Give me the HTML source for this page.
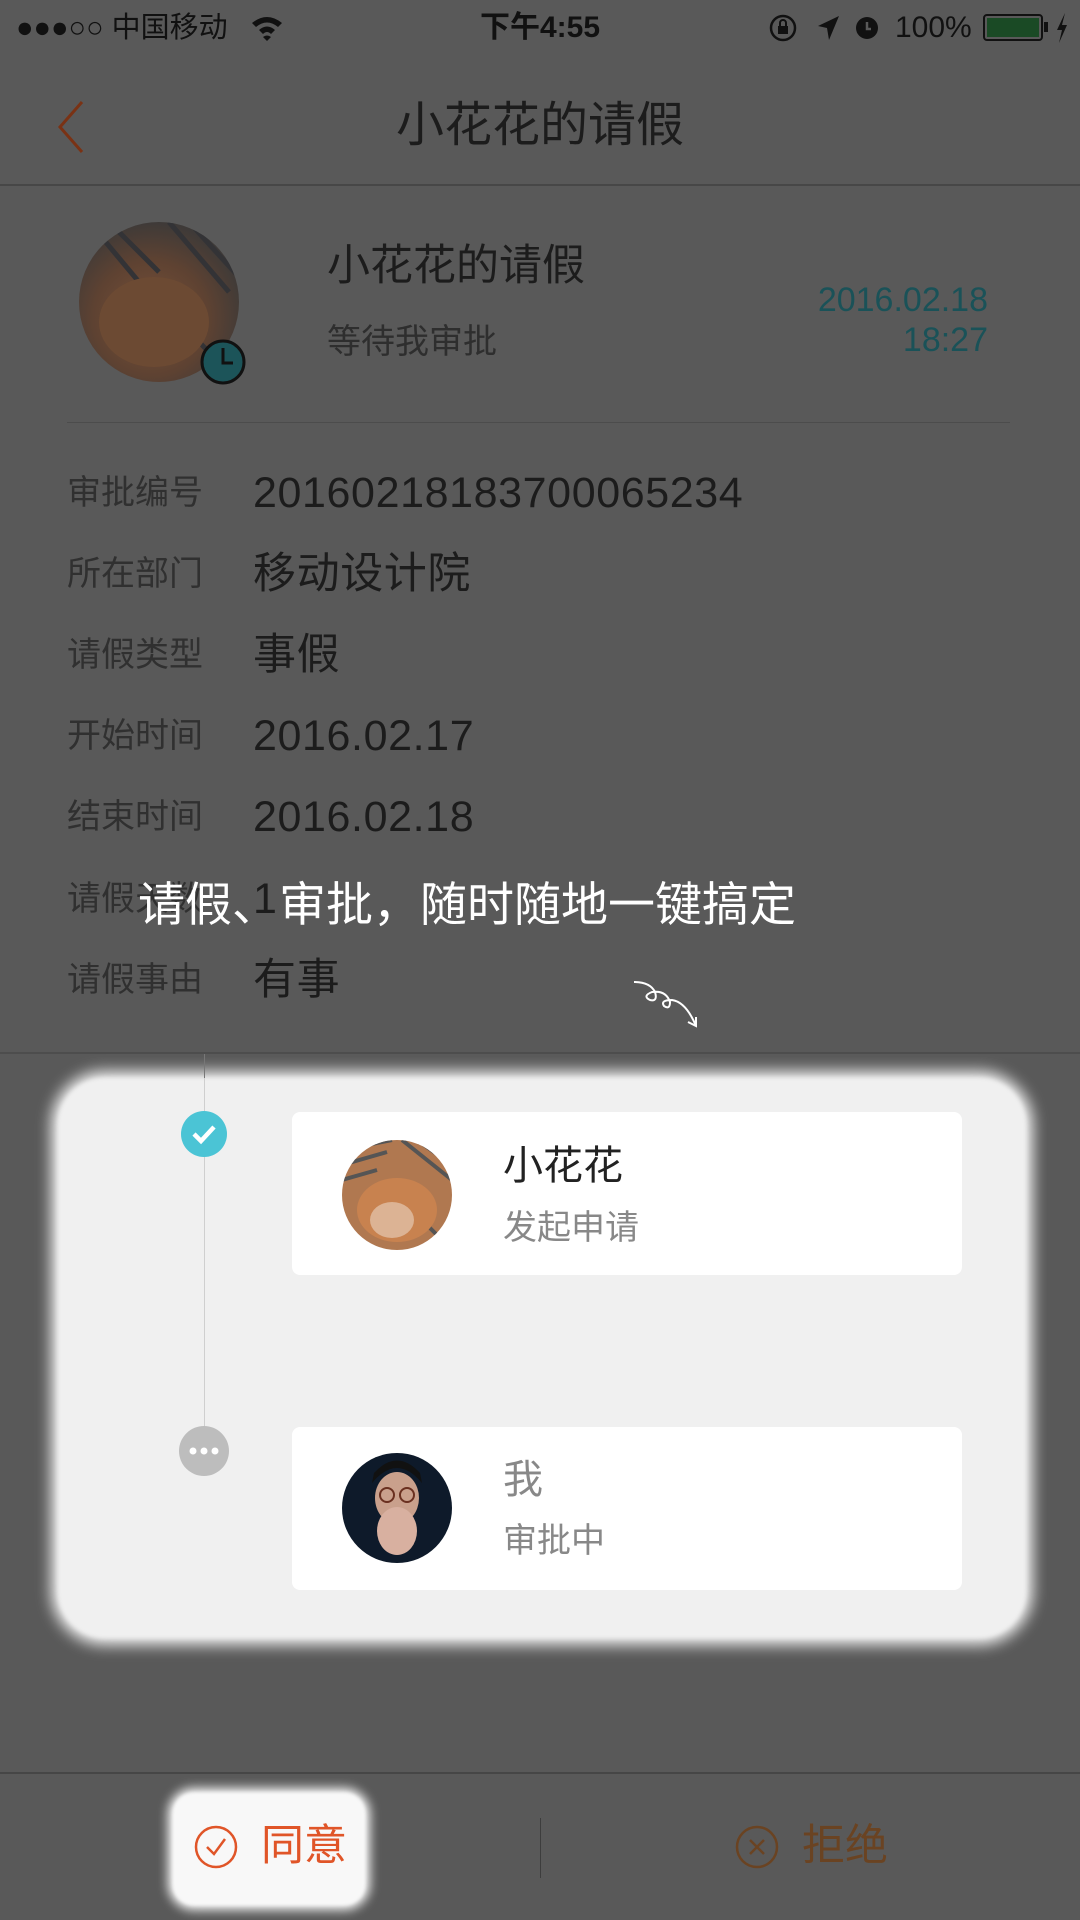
<!DOCTYPE html>
<html><head><meta charset="utf-8"><style>
*{margin:0;padding:0;box-sizing:border-box}
body{width:1080px;height:1920px;background:#595959;position:relative;overflow:hidden;font-family:"Liberation Sans","Noto Sans CJK SC",sans-serif;color:#1c1c1c}
.a{position:absolute;white-space:nowrap}
.lbl{position:absolute;left:67px;font-size:34px;color:#303030;line-height:40px}
.val{position:absolute;left:253px;font-size:43px;color:#1c1c1c;line-height:48px;letter-spacing:0.6px}
</style></head><body>
<div class="a" style="left:16px;top:10px;font-size:29px;color:#111;line-height:36px">●●●○○ 中国移动</div>
<svg class="a" style="left:250px;top:14px" width="34" height="28" viewBox="0 0 34 28"><path d="M2 9 Q17 -3 32 9 L28 13 Q17 4 6 13Z M9 16 Q17 9 25 16 L21 20 Q17 16 13 20Z M17 27 L13 23 Q17 20 21 23Z" fill="#111"/></svg>
<div class="a" style="left:480px;top:10px;font-size:30px;font-weight:bold;color:#111;line-height:36px">下午4:55</div>
<svg class="a" style="left:768px;top:13px" width="30" height="30" viewBox="0 0 30 30"><circle cx="15" cy="15" r="12" fill="none" stroke="#111" stroke-width="2.5"/><rect x="10" y="13" width="10" height="8" fill="#111"/><path d="M12 13v-3a3 3 0 0 1 6 0v3" fill="none" stroke="#111" stroke-width="2"/></svg>
<svg class="a" style="left:815px;top:14px" width="26" height="28" viewBox="0 0 26 28"><path d="M24 2 L3 12 L12 14 L14 26Z" fill="#111"/></svg>
<svg class="a" style="left:853px;top:12px" width="28" height="30" viewBox="0 0 28 30"><circle cx="14" cy="16" r="11" fill="#111"/><path d="M14 10v7h4" stroke="#595959" stroke-width="2.5" fill="none"/></svg>
<div class="a" style="left:895px;top:10px;font-size:30px;color:#111;line-height:36px">100%</div>
<div class="a" style="left:983px;top:14px;width:60px;height:27px;border:2px solid #111;border-radius:4px;padding:2px"><div style="width:100%;height:100%;background:#1a4a25"></div></div>
<div class="a" style="left:1044px;top:22px;width:4px;height:10px;background:#111"></div>
<svg class="a" style="left:1054px;top:12px" width="16" height="32" viewBox="0 0 16 32"><path d="M11 1 L3 18 H8 L5 31 L13 13 H8Z" fill="#111"/></svg>
<svg class="a" style="left:52px;top:98px" width="36" height="58" viewBox="0 0 36 58"><path d="M30 4 L8 29 L30 54" fill="none" stroke="#7a3214" stroke-width="3"/></svg>
<div class="a" style="left:0;width:1080px;text-align:center;top:97px;font-size:48px;color:#1c1c1c;line-height:58px">小花花的请假</div>
<div class="a" style="left:0;top:184px;width:1080px;height:2px;background:#474747"></div>
<svg class="a" style="left:79px;top:222px" width="172" height="172" viewBox="0 0 172 172">
<defs><clipPath id="c1"><circle cx="80" cy="80" r="80"/></clipPath><radialGradient id="cat" cx="45%" cy="60%" r="60%"><stop offset="0" stop-color="#7a5238"/><stop offset="0.6" stop-color="#5e4232"/><stop offset="1" stop-color="#3e3a38"/></radialGradient></defs>
<g clip-path="url(#c1)"><rect width="160" height="160" fill="url(#cat)"/>
<g stroke="#333336" stroke-width="5"><line x1="10" y1="0" x2="60" y2="60"/><line x1="30" y1="0" x2="80" y2="50"/><line x1="90" y1="0" x2="150" y2="70"/><line x1="110" y1="0" x2="160" y2="55"/><line x1="120" y1="120" x2="160" y2="160"/></g>
<ellipse cx="75" cy="100" rx="55" ry="45" fill="#6c4a33"/></g>
<circle cx="144" cy="140" r="21" fill="#1c5459" stroke="#111" stroke-width="3"/><path d="M144 126v15h10" stroke="#111" stroke-width="3" fill="none"/></svg>
<div class="a" style="left:327px;top:241px;font-size:43px;color:#1c1c1c;line-height:50px">小花花的请假</div>
<div class="a" style="left:327px;top:322px;font-size:34px;color:#2e2e2e;line-height:40px">等待我审批</div>
<div class="a" style="right:92px;top:280px;font-size:34px;color:#1a5258;line-height:40px;text-align:right">2016.02.18<br>18:27</div>
<div class="a" style="left:67px;top:422px;width:943px;height:1px;background:#4c4c4c"></div>
<div class="lbl" style="top:473px">审批编号</div><div class="val" style="top:469px">20160218183700065234</div>
<div class="lbl" style="top:554px">所在部门</div><div class="val" style="top:550px">移动设计院</div>
<div class="lbl" style="top:635px">请假类型</div><div class="val" style="top:631px">事假</div>
<div class="lbl" style="top:716px">开始时间</div><div class="val" style="top:712px">2016.02.17</div>
<div class="lbl" style="top:797px">结束时间</div><div class="val" style="top:793px">2016.02.18</div>
<div class="lbl" style="top:879px">请假天数</div><div class="val" style="top:875px">1</div>
<div class="lbl" style="top:960px">请假事由</div><div class="val" style="top:956px">有事</div>
<div class="a" style="left:138px;top:876px;font-size:47px;color:#fff;line-height:58px">请假、审批，随时随地一键搞定</div>
<svg class="a" style="left:630px;top:978px" width="80" height="54" viewBox="0 0 80 54"><path d="M4 4 Q20 4 25 14 Q28 24 20 22 Q12 18 22 14 Q36 12 40 24 Q40 32 34 28 Q30 22 42 22 Q56 24 66 48 M58 44 L66 48 L66 39" fill="none" stroke="#fff" stroke-width="2"/></svg>
<div class="a" style="left:0;top:1052px;width:1080px;height:2px;background:#4d4d4d"></div>
<div class="a" style="left:57px;top:1077px;width:970px;height:562px;background:#f0f0f0;border-radius:48px;box-shadow:0 0 14px 6px #f0f0f0;filter:blur(2px)"></div>
<div class="a" style="left:204px;top:1054px;width:1px;height:400px;background:#cfcfcf"></div>
<div class="a" style="left:204px;top:1054px;width:1px;height:24px;background:#777"></div>
<svg class="a" style="left:181px;top:1111px" width="46" height="46" viewBox="0 0 46 46"><circle cx="23" cy="23" r="23" fill="#4bc4d5"/><path d="M13 23 L20 30 L33 16" stroke="#fff" stroke-width="4.5" fill="none"/></svg>
<div class="a" style="left:292px;top:1112px;width:670px;height:163px;background:#fff;border-radius:8px"></div>
<svg class="a" style="left:342px;top:1140px" width="110" height="110" viewBox="0 0 110 110"><defs><clipPath id="c2"><circle cx="55" cy="55" r="55"/></clipPath></defs><g clip-path="url(#c2)"><rect width="110" height="110" fill="#b07850"/><g stroke="#555" stroke-width="4"><line x1="0" y1="10" x2="50" y2="0"/><line x1="0" y1="25" x2="45" y2="12"/><line x1="0" y1="40" x2="35" y2="30"/><line x1="60" y1="0" x2="110" y2="40"/><line x1="75" y1="0" x2="110" y2="25"/><line x1="80" y1="80" x2="110" y2="110"/></g><ellipse cx="55" cy="70" rx="40" ry="32" fill="#c8824f"/><ellipse cx="50" cy="80" rx="22" ry="18" fill="#dcb394"/></g></svg>
<div class="a" style="left:503px;top:1142px;font-size:40px;color:#222;line-height:48px">小花花</div>
<div class="a" style="left:503px;top:1208px;font-size:34px;color:#888;line-height:40px">发起申请</div>
<svg class="a" style="left:179px;top:1426px" width="50" height="50" viewBox="0 0 50 50"><circle cx="25" cy="25" r="25" fill="#bdbdbd"/><circle cx="14" cy="25" r="3.5" fill="#fff"/><circle cx="25" cy="25" r="3.5" fill="#fff"/><circle cx="36" cy="25" r="3.5" fill="#fff"/></svg>
<div class="a" style="left:292px;top:1427px;width:670px;height:163px;background:#fff;border-radius:8px"></div>
<svg class="a" style="left:342px;top:1453px" width="110" height="110" viewBox="0 0 110 110"><defs><clipPath id="c3"><circle cx="55" cy="55" r="55"/></clipPath></defs><g clip-path="url(#c3)"><rect width="110" height="110" fill="#0e1a2a"/><ellipse cx="55" cy="45" rx="22" ry="26" fill="#c9a08c"/><path d="M30 30 Q55 0 80 30 L78 20 Q55 -5 32 20Z" fill="#111"/><ellipse cx="55" cy="78" rx="20" ry="24" fill="#d8b0a0"/><circle cx="45" cy="42" r="7" fill="none" stroke="#6a3020" stroke-width="2"/><circle cx="65" cy="42" r="7" fill="none" stroke="#6a3020" stroke-width="2"/></g></svg>
<div class="a" style="left:503px;top:1456px;font-size:40px;color:#888;line-height:48px">我</div>
<div class="a" style="left:503px;top:1521px;font-size:34px;color:#888;line-height:40px">审批中</div>
<div class="a" style="left:0;top:1772px;width:1080px;height:2px;background:#464646"></div>
<div class="a" style="left:172px;top:1792px;width:194px;height:114px;background:#f8f8f8;border-radius:22px;box-shadow:0 0 10px 4px #f8f8f8;filter:blur(1.5px)"></div>
<svg class="a" style="left:194px;top:1825px" width="44" height="44" viewBox="0 0 44 44"><circle cx="22" cy="22" r="20" fill="none" stroke="#e05528" stroke-width="2.5"/><path d="M13 22 L20 29 L31 14" fill="none" stroke="#e05528" stroke-width="2.5"/></svg>
<div class="a" style="left:261px;top:1820px;font-size:43px;color:#e05528;line-height:52px">同意</div>
<div class="a" style="left:540px;top:1818px;width:1px;height:60px;background:#3d3d3d"></div>
<svg class="a" style="left:735px;top:1825px" width="44" height="44" viewBox="0 0 44 44"><circle cx="22" cy="22" r="20" fill="none" stroke="#6a4322" stroke-width="2.5"/><path d="M15 15 L29 29 M29 15 L15 29" stroke="#6a4322" stroke-width="2.5"/></svg>
<div class="a" style="left:802px;top:1820px;font-size:43px;color:#6a4322;line-height:52px">拒绝</div>
</body></html>
